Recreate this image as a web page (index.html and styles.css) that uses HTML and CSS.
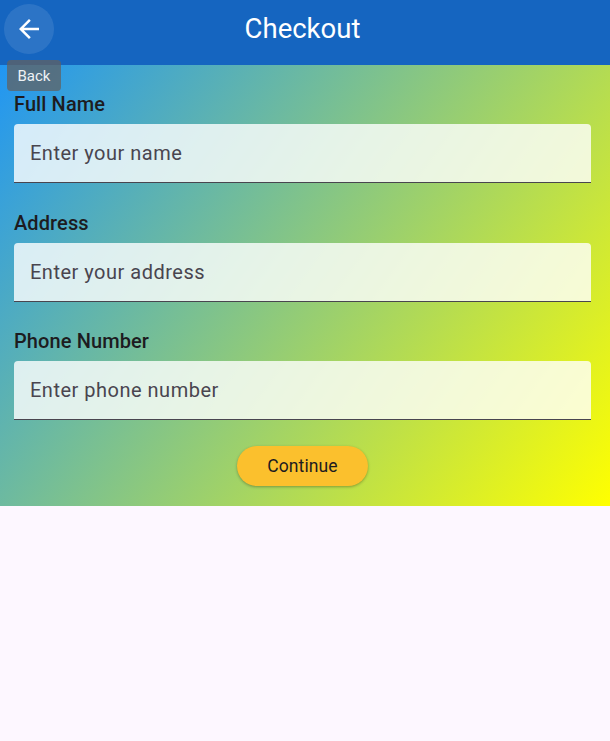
FILE: index.html
```html
<!DOCTYPE html>
<html>
<head>
<meta charset="utf-8">
<link rel="stylesheet" href="styles.css">
</head>
<body>
<header class="appbar">
  <button class="back" aria-label="Back">
    <svg width="30" height="30" viewBox="0 0 24 24"><path d="M20 11H7.83l5.59-5.59L12 4l-8 8 8 8 1.41-1.41L7.83 13H20v-2z" fill="#fff"/></svg>
  </button>
  <h1 class="title">Checkout</h1>
  <div class="tooltip">Back</div>
</header>
<main class="form">
  <div class="group">
    <label class="label">Full Name</label>
    <div class="field"><span class="ph">Enter your name</span></div>
  </div>
  <div class="group">
    <label class="label">Address</label>
    <div class="field"><span class="ph">Enter your address</span></div>
  </div>
  <div class="group">
    <label class="label">Phone Number</label>
    <div class="field"><span class="ph">Enter phone number</span></div>
  </div>
  <div class="actions">
    <button class="continue">Continue</button>
  </div>
</main>
</body>
</html>
```
FILE: styles.css
```css
html, body {
  margin: 0;
  padding: 0;
}
body {
  background: #fdf7ff;
  font-family: Roboto, "Noto Sans", sans-serif;
  width: 610px;
  height: 741px;
}
.appbar {
  position: relative;
  height: 65px;
  background: #1565c0;
  display: flex;
  justify-content: center;
}
.back {
  position: absolute;
  left: 4px;
  top: 4px;
  width: 50px;
  height: 50px;
  border-radius: 50%;
  border: none;
  background: rgba(255,255,255,0.1);
  display: flex;
  align-items: center;
  justify-content: center;
  padding: 0;
}
.title {
  margin: 0 5px 0 0;
  color: #fff;
  font-weight: 400;
  font-size: 27.5px;
  line-height: 58px;
}
.tooltip {
  position: absolute;
  left: 7px;
  top: 60px;
  width: 54px;
  height: 31px;
  background: rgba(97,97,97,0.75);
  color: #eef2f5;
  border-radius: 4px;
  font-size: 15px;
  display: flex;
  align-items: center;
  justify-content: center;
  z-index: 2;
}
.form {
  box-sizing: border-box;
  height: 441px;
  background: linear-gradient(125.86deg, #2196f3, #ffff00);
  padding: 27px 19px 20px 14px;
  display: flex;
  flex-direction: column;
}
.group {
  display: flex;
  flex-direction: column;
  margin-bottom: 28px;
}
.group:nth-child(2) {
  margin-bottom: 27px;
}
.group:nth-child(3) {
  margin-bottom: 26px;
}
.label {
  font-size: 20px;
  font-weight: 500;
  line-height: 24px;
  letter-spacing: 0.1px;
  color: #1d1b20;
  margin-bottom: 8px;
}
.field {
  height: 58px;
  border-bottom: 1px solid #49454f;
  border-radius: 4px 4px 0 0;
  background: rgba(255,255,255,0.8);
  display: flex;
  align-items: center;
  padding-left: 16px;
}
.ph {
  font-size: 20px;
  letter-spacing: 0.5px;
  color: #49454f;
}
.actions {
  display: flex;
  justify-content: center;
}
.continue {
  height: 40px;
  width: 131px;
  border: none;
  border-radius: 20px;
  background: #fbc02d;
  color: #1d1b20;
  font-family: Roboto, sans-serif;
  font-size: 17.5px;
  letter-spacing: 0.1px;
  box-shadow: 0 1px 3px rgba(0,0,0,0.3);
}
```
